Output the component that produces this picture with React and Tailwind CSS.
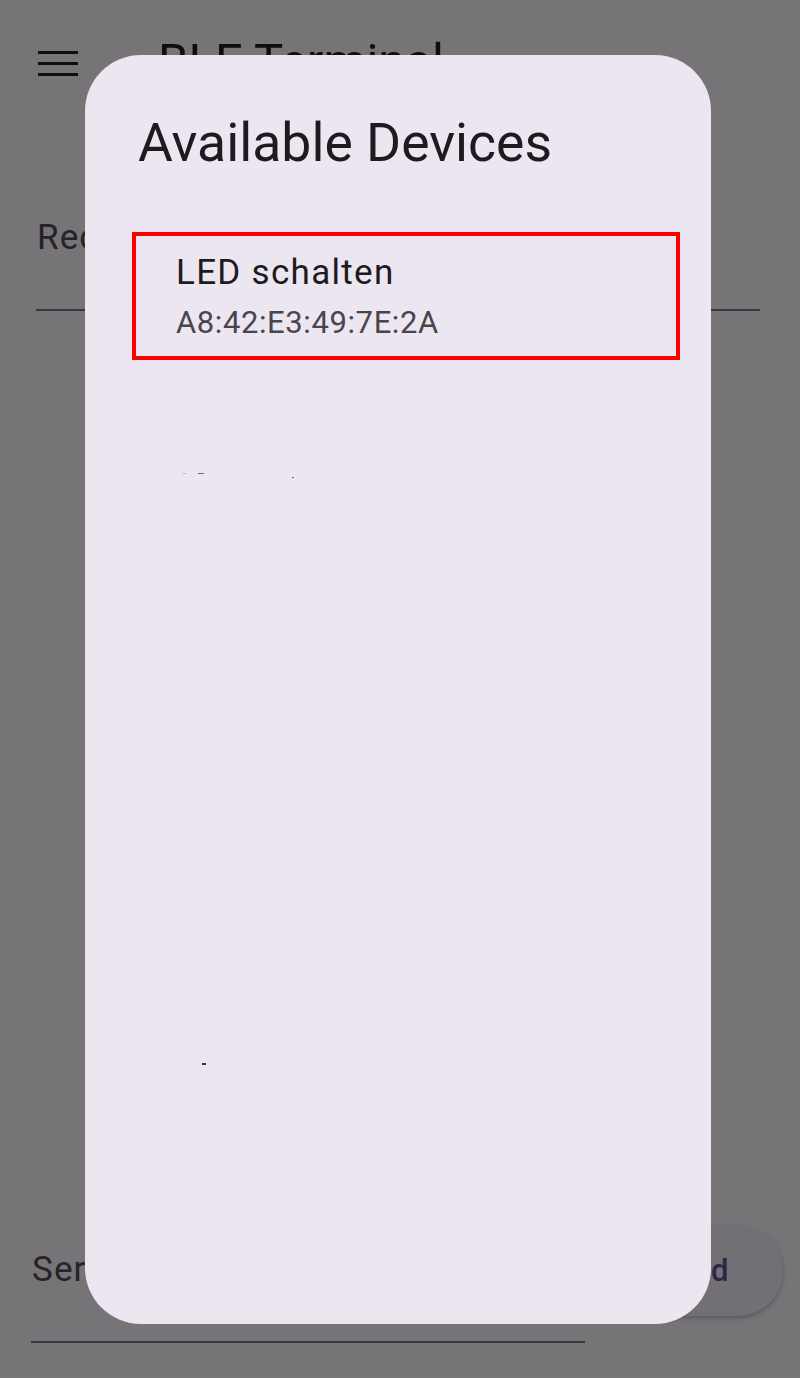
import React from "react";

const Hamburger = () => (
  <div className="flex flex-col gap-[8px] w-[40px]">
    <div className="h-[3px] bg-[#0e0d10]" />
    <div className="h-[3px] bg-[#0e0d10]" />
    <div className="h-[3px] bg-[#0e0d10]" />
  </div>
);

const DeviceDialog = () => {
  const devices = [{ name: "LED schalten", address: "A8:42:E3:49:7E:2A" }];

  return (
    <div className="absolute left-[85px] top-[55px] w-[626px] h-[1269px] rounded-[56px] bg-[#ECE6F0] pt-[56px]">
      <h2 className="pl-[53px] text-[53.5px] leading-[64px] font-normal text-[#1D1B20]">
        Available Devices
      </h2>

      <div className="mt-[57px] flex flex-col">
        {devices.map((d) => (
          <div
            key={d.address}
            className="ml-[47px] w-[548px] border-4 border-[#ff0000] pt-[13px] pb-[13px] pl-[40px]"
          >
            <div className="text-[35px] leading-[48px] tracking-[1.3px] text-[#1D1B20]">
              {d.name}
            </div>
            <div className="mt-[6px] text-[31px] leading-[40px] tracking-[0.6px] text-[#49454F]">
              {d.address}
            </div>
          </div>
        ))}
      </div>

      {/* stray render specks */}
      <div className="absolute left-[98px] top-[418px] w-[3px] h-[1px] bg-[#b8b4bd]" />
      <div className="absolute left-[113px] top-[418px] w-[6px] h-[1px] bg-[#6e6a73]" />
      <div className="absolute left-[207px] top-[422px] w-[2px] h-[1px] bg-[#6e6a73]" />
      <div className="absolute left-[117px] top-[1008px] w-[4px] h-[2px] bg-[#3a3740]" />
    </div>
  );
};

const App = () => {
  return (
    <div
      className="relative w-[800px] h-[1378px] overflow-hidden bg-[#767477] flex flex-col"
      style={{ fontFamily: "Roboto, 'Noto Sans', sans-serif" }}
    >
      {/* app bar */}
      <div className="flex items-start pt-[35px]">
        <div className="ml-[38px] mt-[16px]">
          <Hamburger />
        </div>
        <h1 className="ml-[80px] text-[49px] leading-[54px] text-[#0e0d10]">BLE Terminal</h1>
      </div>

      {/* received field */}
      <div className="mt-[127px] ml-[36px] mr-[40px] border-b-2 border-[#3a383d] pb-[49px]">
        <div className="pl-[1px] text-[35px] leading-[44px] tracking-[1.1px] text-[#252328]">
          Received
        </div>
      </div>

      <div className="flex-1" />

      {/* send row */}
      <div className="flex items-start pl-[31px] pb-[35px]">
        <div className="w-[554px] mt-[22px] border-b-2 border-[#3a383d] pb-[49px]">
          <div className="pl-[1px] text-[35px] leading-[44px] tracking-[1.1px] text-[#252328]">
            Serial
          </div>
        </div>
        <button className="ml-[24px] w-[174px] h-[90px] rounded-full bg-[#727074] shadow-[0_2px_4px_rgba(0,0,0,0.25)] flex items-center justify-center pr-[6px] text-[31px] font-medium tracking-[0.5px] text-[#2f2548]">
          Send
        </button>
      </div>

      <DeviceDialog />
    </div>
  );
};

export default App;
